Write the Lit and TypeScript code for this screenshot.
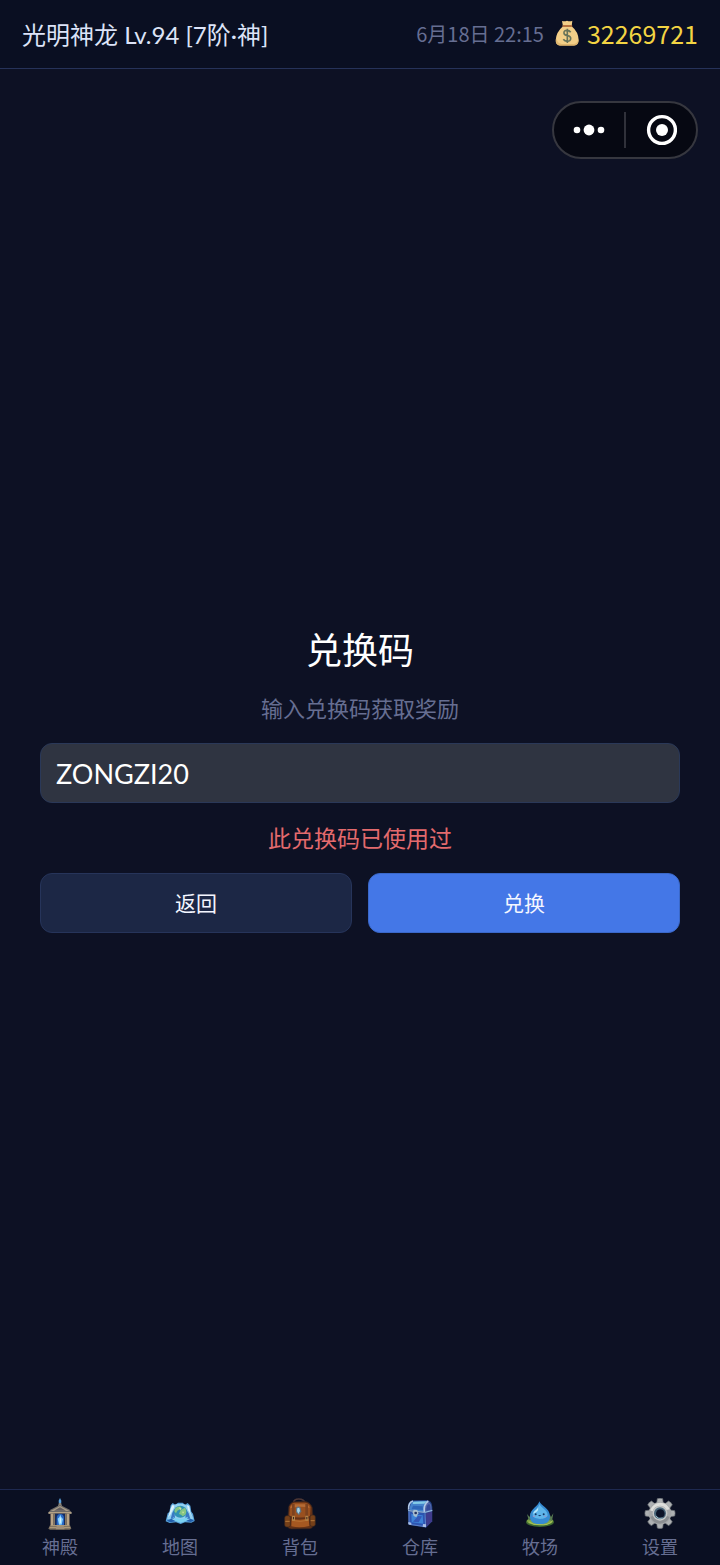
import { LitElement, html, css, svg, nothing } from "lit";
import type { SVGTemplateResult } from "lit";
import { customElement, property, state } from "lit/decorators.js";
import { classMap } from "lit/directives/class-map.js";

interface NavItem {
  id: string;
  label: string;
  icon: SVGTemplateResult;
}

const temple = svg`
  <path d="M45 22 L44 8 L48 0 L52 8 L51 22Z" fill="#5b9fd8" />
  <path d="M42 24 L45 15 H51 L54 24Z" fill="#8c8579" />
  <path d="M13 43 L22 34 L48 20 L74 34 L83 43 V48 H13Z" fill="#6d6a68" />
  <path d="M20 39 L48 24 L76 39Z" fill="#a99c87" />
  <path d="M30 38 L48 28 L66 38Z" fill="#615d60" />
  <rect x="14" y="42" width="68" height="5" fill="#b3a184" />
  <rect x="19" y="47" width="58" height="36" fill="#423f45" />
  <rect x="32" y="47" width="32" height="37" fill="#152c5e" />
  <rect x="20" y="47" width="8" height="35" fill="#b9a486" />
  <rect x="28" y="47" width="5" height="35" fill="#817463" />
  <rect x="68" y="47" width="8" height="35" fill="#b9a486" />
  <rect x="63" y="47" width="5" height="35" fill="#817463" />
  <path d="M38 82 V62 Q38 48 49 48 Q60 48 60 62 V82Z" fill="#2867c4" />
  <path d="M45 80 L41 62 L46 58 L49 50 L52 58 L57 63 L53 80Z" fill="#88d3ff" />
  <path d="M47 76 L48 56 L51 64 L50 76Z" fill="#e4f8ff" />
  <path d="M18 82 H78 L82 92 L77 95 H18 L13 92Z" fill="#776c5e" />
  <path d="M20 83 H76 M17 89 H79" stroke="#b5a07e" stroke-width="3" />
  <path d="M38 84 H59 L62 94 H35Z" fill="#9f8e78" />
`;

const map = svg`
  <path d="M5 70 L11 46 L16 42 L20 22 L26 15 L34 20 L42 14 H56 L63 20 L71 15 L79 23 L82 41 L87 47 L92 69 L82 74 L63 73 L50 78 L36 73 L17 75Z" fill="#5aa3da" />
  <path d="M9 62 L17 44 L23 22 L30 21 L38 18 H58 L68 22 L74 21 L80 43 L88 62 L70 66 L50 73 L30 67Z" fill="#92d0f0" />
  <path d="M20 62 L25 44 L31 34 L33 62Z M66 34 L74 46 L79 62 L64 63Z" fill="#3a78c4" />
  <path d="M21 29 L27 19 L31 27 L19 50 L12 58Z M69 22 L76 25 L79 44 L86 58 L72 36Z" fill="#d9f1fc" />
  <ellipse cx="49" cy="41" rx="20" ry="18" fill="#2f91b3" />
  <path d="M34 31 Q43 22 52 27 L48 34 L40 38 L36 46 L31 40Z M50 36 L63 29 Q70 40 64 50 L56 55 L51 50 L45 48Z" fill="#86c583" />
  <path d="M44 28 L53 31 L49 37Z M54 41 L61 41 L57 47Z" fill="#c9e39b" />
  <path d="M26 57 Q48 70 72 56 L67 69 L50 74 L35 69Z" fill="#7bd2f2" />
  <path d="M8 68 L22 62 L34 70 L20 73Z M67 69 L80 62 L90 68 L80 72Z" fill="#2260ad" />
`;

const backpack = svg`
  <path d="M29 14 Q29 3 44 3 Q61 3 63 16" fill="none" stroke="#4e3735" stroke-width="5" />
  <path d="M14 27 Q18 13 31 11 L63 10 Q80 13 85 29 L88 76 Q90 89 77 92 L22 93 Q8 92 10 78Z" fill="#633117" stroke="#30211f" stroke-width="2" />
  <path d="M18 25 Q23 15 33 14 H63 Q77 16 80 27 L78 54 Q48 64 16 53Z" fill="#99501f" />
  <path d="M25 19 H67 Q75 22 77 30 Q47 22 18 31Z" fill="#b56b35" />
  <rect x="24" y="18" width="8" height="62" fill="#7c421f" />
  <rect x="64" y="18" width="8" height="62" fill="#7c421f" />
  <rect x="2" y="53" width="17" height="34" rx="6" fill="#764019" stroke="#39251d" stroke-width="2" />
  <rect x="78" y="51" width="16" height="34" rx="6" fill="#764019" stroke="#39251d" stroke-width="2" />
  <path d="M23 62 Q47 69 74 61 L76 84 Q48 91 22 85Z" fill="#a65821" />
  <path d="M24 67 Q48 74 74 66" fill="none" stroke="#c07c3a" stroke-width="2" />
  <path d="M24 53 H33 V68 H24Z M64 53 H73 V68 H64Z" fill="#b38247" />
  <path d="M27 57 H30 V64 H27Z M67 57 H70 V64 H67Z" fill="#3f291f" />
  <path d="M36 30 L42 25 L50 29 L52 40 L45 52 L36 42Z" fill="#5f7485" />
  <path d="M40 31 L46 29 L48 39 L43 47 L39 39Z" fill="#a8d5e6" />
  <path d="M4 70 H17 M80 68 H92" stroke="#b47739" stroke-width="3" />
`;

const chest = svg`
  <path d="M12 30 Q12 8 27 7 L69 6 Q84 8 85 27 V70 L66 89 L14 80Z" fill="#213f83" />
  <path d="M18 36 Q17 13 29 10 L72 9 Q57 15 61 42Z" fill="#4583cc" />
  <path d="M28 11 L69 10 L61 17 L26 18Z" fill="#83cbe8" />
  <path d="M27 23 L56 25 L57 36 L23 33Z" fill="#2e66b9" />
  <path d="M62 41 Q61 16 74 12 Q83 15 83 36Z" fill="#5466a8" />
  <path d="M67 38 Q66 22 75 18 Q80 22 79 36Z" fill="#334a99" />
  <path d="M14 41 L62 46 L66 86 L15 79Z" fill="#2c55b2" />
  <path d="M66 46 L84 40 V70 L67 87Z" fill="#3f3b8c" />
  <path d="M22 48 L56 52 L58 77 L23 73Z" fill="#3d82d6" />
  <path d="M42 54 L54 55 L44 73 L27 71Z" fill="#3457b6" />
  <path d="M14 35 Q12 13 27 9 M61 42 Q58 19 73 9" fill="none" stroke="#b2c9e6" stroke-width="5" />
  <path d="M12 38 L63 43 L85 37" fill="none" stroke="#90b4dc" stroke-width="4" />
  <path d="M15 41 V79 L65 86 L63 44" fill="none" stroke="#5f80c8" stroke-width="3" />
  <path d="M29 35 L40 36 L43 46 L37 58 L29 54 L26 43Z" fill="#a9bfcf" />
  <circle cx="35" cy="45" r="4" fill="#243362" />
  <path d="M13 72 L22 74 V81 L13 79Z M57 78 L66 79 V88 L56 86Z" fill="#a9bfe6" />
`;

const slime = svg`
  <ellipse cx="48" cy="72" rx="42" ry="15" fill="#3c6631" />
  <ellipse cx="48" cy="69" rx="39" ry="13" fill="#83a846" />
  <path d="M14 67 L9 48 L17 57 L20 44 L25 66 M74 66 L77 49 L81 57 L88 46 L84 69" fill="#587b52" />
  <path d="M46 10 C50 23 77 30 78 54 C79 72 65 79 48 79 C30 79 17 72 18 54 C19 32 43 26 46 10Z" fill="#368bd2" />
  <path d="M46 18 C50 29 71 36 71 51 C70 66 29 67 26 52 C25 36 43 34 46 18Z" fill="#5fb5ea" />
  <path d="M42 27 C41 37 30 36 28 47 C36 43 45 40 42 27Z" fill="#b9e8fb" />
  <circle cx="35" cy="49" r="3" fill="#153666" />
  <circle cx="59" cy="49" r="3" fill="#153666" />
  <path d="M42 51 Q47 58 52 51Z" fill="#183d72" />
  <ellipse cx="30" cy="55" rx="4" ry="2" fill="#9c93cc" />
  <ellipse cx="64" cy="55" rx="4" ry="2" fill="#9c93cc" />
  <path d="M15 72 Q28 82 48 80 Q72 83 84 70" fill="none" stroke="#a6c35c" stroke-width="3" />
`;

const teeth = [0, 45, 90, 135, 180, 225, 270, 315];

const gear = svg`
  ${teeth.map((a) => svg`<path d="M38 17 L40 2 Q48 -1 56 2 L58 17Z" fill="#aeb1b3" stroke="#6f7478" stroke-width="2" transform="rotate(${a} 48 46)" />`)}
  <circle cx="48" cy="46" r="34" fill="#a5a7a9" />
  <path d="M18 37 Q27 14 49 14 Q70 15 77 34 L68 36 Q61 23 48 23 Q31 24 26 40Z" fill="#dedfdc" />
  <path d="M19 57 Q28 77 48 77 Q69 76 77 57 L68 53 Q62 66 49 67 Q32 66 27 53Z" fill="#8b8e91" />
  <circle cx="48" cy="46" r="22" fill="#c6c8c8" />
  <circle cx="48" cy="46" r="18" fill="#496579" />
  <circle cx="49" cy="47" r="13" fill="#0b1227" />
  <path d="M35 54 Q43 65 56 60" fill="none" stroke="#98bdca" stroke-width="3" />
`;

const NAV_ITEMS: NavItem[] = [
  { id: "temple", label: "神殿", icon: temple },
  { id: "map", label: "地图", icon: map },
  { id: "bag", label: "背包", icon: backpack },
  { id: "storage", label: "仓库", icon: chest },
  { id: "ranch", label: "牧场", icon: slime },
  { id: "settings", label: "设置", icon: gear },
];

@customElement("status-bar")
export class StatusBar extends LitElement {
  @property() player = "";
  @property() time = "";
  @property({ type: Number }) coins = 0;

  static styles = css`
    :host {
      display: flex;
      align-items: center;
      justify-content: space-between;
      box-sizing: border-box;
      height: 69px;
      padding: 0 22px 2px;
      background: #0a0f22;
      border-bottom: 1px solid #263259;
      white-space: nowrap;
    }
    .player {
      color: #dce3f8;
      font-family: Lato, "Noto Sans CJK SC", sans-serif;
      font-size: 24px;
    }
    .right {
      display: flex;
      align-items: center;
    }
    .time {
      color: #666e92;
      font-size: 20px;
    }
    .bag {
      width: 24px;
      height: 26px;
      margin: 0 8px 0 11px;
    }
    .coins {
      color: #f3d443;
      font-size: 25px;
    }
  `;

  render() {
    return html`
      <span class="player">${this.player}</span>
      <div class="right">
        <span class="time">${this.time}</span>
        <svg class="bag" viewBox="0 0 72 78" aria-hidden="true">
          <path d="M21 3 Q29 5 36 2 Q45 5 52 2 L50 19 Q70 36 71 60 Q71 75 58 76 H14 Q1 75 2 60 Q4 36 24 19Z" fill="#f3cf88" />
          <path d="M4 54 Q6 70 20 72 H57 Q68 70 70 58 Q72 76 57 77 H15 Q-1 76 4 54Z" fill="#dfb66e" />
          <rect x="22" y="15" width="30" height="6" rx="3" fill="#b5723f" />
          <path d="M47 37 Q43 31 36 31 Q26 31 27 39 Q27 45 37 47 Q48 49 47 57 Q46 64 37 64 Q29 64 25 58 M37 26 V69" fill="none" stroke="#68745a" stroke-width="5" />
        </svg>
        <span class="coins">${this.coins}</span>
      </div>
    `;
  }
}

@customElement("capsule-menu")
export class CapsuleMenu extends LitElement {
  static styles = css`
    :host {
      display: flex;
      align-items: center;
      box-sizing: border-box;
      width: 146px;
      height: 58px;
      border: 2px solid #36373f;
      border-radius: 29px;
      background: #060812;
    }
    button {
      flex: 1;
      display: flex;
      align-items: center;
      justify-content: center;
      height: 100%;
      padding: 0;
      border: 0;
      background: none;
      color: #fff;
      cursor: pointer;
    }
    .divider {
      width: 2px;
      height: 36px;
      background: #30313a;
    }
    svg {
      width: 32px;
      height: 32px;
      fill: currentColor;
    }
  `;

  render() {
    return html`
      <button type="button" aria-label="更多">
        <svg viewBox="0 0 32 32">
          <circle cx="4" cy="16" r="3.3" />
          <circle cx="16" cy="16" r="5.4" />
          <circle cx="28" cy="16" r="3.3" />
        </svg>
      </button>
      <span class="divider"></span>
      <button type="button" aria-label="关闭">
        <svg viewBox="0 0 32 32">
          <circle cx="17" cy="16" r="13.4" fill="none" stroke="currentColor" stroke-width="3.4" />
          <circle cx="17" cy="16" r="6" />
        </svg>
      </button>
    `;
  }
}

@customElement("redeem-form")
export class RedeemForm extends LitElement {
  @state() private _code = "ZONGZI20";
  @state() private _error = "此兑换码已使用过";

  static styles = css`
    form {
      display: flex;
      flex-direction: column;
      gap: 16px;
      text-align: center;
    }
    h1 {
      margin: 0;
      padding-bottom: 4px;
      color: #fff;
      font-size: 36px;
      font-weight: 400;
      line-height: 46px;
    }
    label {
      padding-bottom: 4px;
      color: #666e92;
      font-size: 22px;
      line-height: 32px;
    }
    input {
      box-sizing: border-box;
      width: 100%;
      height: 60px;
      padding: 0 15px;
      border: 1px solid #2a3858;
      border-radius: 12px;
      outline: none;
      background: #2f3441;
      color: #fff;
      font-family: Lato, "Noto Sans CJK SC", sans-serif;
      font-size: 27px;
    }
    .error {
      margin: 0;
      padding-bottom: 2px;
      color: #e36a6d;
      font-size: 23px;
      line-height: 36px;
    }
    .actions {
      display: grid;
      grid-template-columns: 1fr 1fr;
      gap: 16px;
    }
    button {
      height: 60px;
      padding: 0 0 2px;
      border: 1px solid #26345a;
      border-radius: 12px;
      background: #1c2745;
      color: #f4f6ff;
      font-family: inherit;
      font-size: 21px;
      cursor: pointer;
    }
    .primary {
      border-color: #3a68c9;
      background: #4477e7;
    }
  `;

  private _handleInput(e: Event): void {
    this._code = (e.target as HTMLInputElement).value;
    this._error = "";
  }

  private _handleSubmit(e: Event): void {
    e.preventDefault();
    this._error = this._code ? "此兑换码已使用过" : "";
  }

  render() {
    return html`
      <form @submit=${this._handleSubmit}>
        <h1>兑换码</h1>
        <label for="code">输入兑换码获取奖励</label>
        <input id="code" type="text" autocomplete="off" .value=${this._code} @input=${this._handleInput} />
        ${this._error ? html`<p class="error" role="alert">${this._error}</p>` : nothing}
        <div class="actions">
          <button type="button">返回</button>
          <button type="submit" class="primary">兑换</button>
        </div>
      </form>
    `;
  }
}

@customElement("bottom-nav")
export class BottomNav extends LitElement {
  @state() private _active = "";

  static styles = css`
    nav {
      display: grid;
      grid-template-columns: repeat(6, 1fr);
      box-sizing: border-box;
      height: 76px;
      border-top: 1px solid #1e2950;
      background: #0a0f22;
    }
    button {
      display: flex;
      flex-direction: column;
      align-items: center;
      gap: 3px;
      padding: 8px 0 0;
      border: 0;
      background: none;
      color: #666e92;
      font-family: inherit;
      font-size: 18px;
      line-height: 26px;
      cursor: pointer;
    }
    .active {
      color: #dce3f8;
    }
    svg {
      width: 32px;
      height: 32px;
    }
  `;

  render() {
    return html`
      <nav>
        ${NAV_ITEMS.map(
          (item) => html`
            <button
              type="button"
              class=${classMap({ active: item.id === this._active })}
              @click=${() => (this._active = item.id)}
            >
              <svg viewBox="0 0 96 96" aria-hidden="true">${item.icon}</svg>
              <span>${item.label}</span>
            </button>
          `
        )}
      </nav>
    `;
  }
}

@customElement("app-root")
export class AppRoot extends LitElement {
  static styles = css`
    :host {
      display: flex;
      flex-direction: column;
      min-height: 100vh;
      background: #0d1124;
      font-family: "Noto Sans CJK SC", sans-serif;
    }
    main {
      position: relative;
      flex: 1;
      display: flex;
      flex-direction: column;
      justify-content: center;
      padding: 0 40px;
    }
    /* floats above the page content */
    capsule-menu {
      position: absolute;
      top: 32px;
      right: 22px;
    }
  `;

  render() {
    return html`
      <status-bar player="光明神龙 Lv.94 [7阶·神]" time="6月18日 22:15" coins="32269721"></status-bar>
      <main>
        <capsule-menu></capsule-menu>
        <redeem-form></redeem-form>
      </main>
      <bottom-nav></bottom-nav>
    `;
  }
}

declare global {
  interface HTMLElementTagNameMap {
    "app-root": AppRoot;
    "status-bar": StatusBar;
    "capsule-menu": CapsuleMenu;
    "redeem-form": RedeemForm;
    "bottom-nav": BottomNav;
  }
}
